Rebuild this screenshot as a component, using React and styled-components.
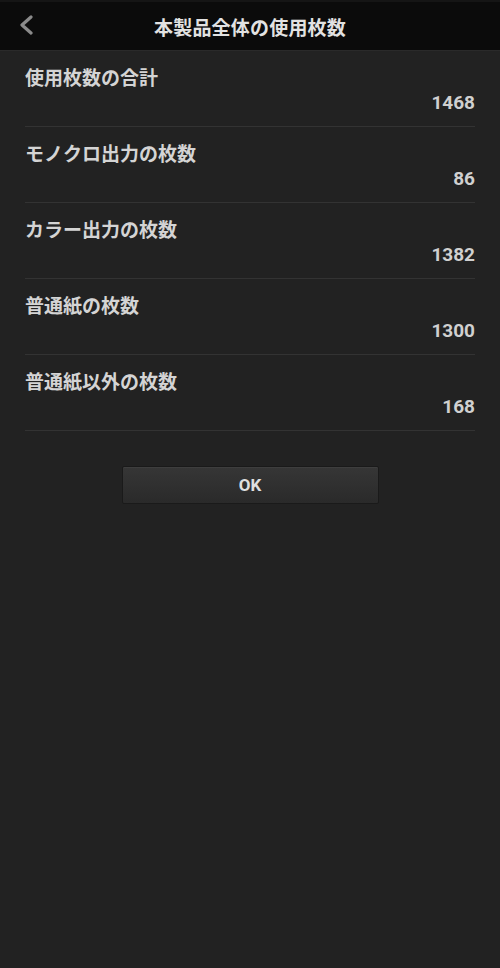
import React from 'react'
import styled, { createGlobalStyle } from 'styled-components'

const Global = createGlobalStyle`
  html, body {
    margin: 0;
    padding: 0;
    background: #222222;
  }
  body {
    font-family: Roboto, "Noto Sans CJK JP", sans-serif;
  }
`

const Screen = styled.div`
  width: 500px;
  min-height: 968px;
  background: #222222;
  display: flex;
  flex-direction: column;
`

const Header = styled.div`
  height: 48px;
  background: #0b0b0b;
  border-top: 2px solid #151515;
  border-bottom: 1px solid #2a2a2a;
  display: flex;
  align-items: center;
  justify-content: center;
  position: relative;
`

const BackButton = styled.div`
  position: absolute;
  left: 16px;
  top: 12px;
  width: 20px;
  height: 22px;
  display: flex;
  align-items: center;
  justify-content: center;
`

const Title = styled.div`
  font-size: 19px;
  font-weight: bold;
  color: #e2e2e2;
  letter-spacing: 0.2px;
`

const List = styled.div`
  padding: 0 25px;
  display: flex;
  flex-direction: column;
`

const Row = styled.div`
  height: 76px;
  box-sizing: border-box;
  border-bottom: 1px solid #333333;
  display: flex;
  flex-direction: column;
`

const Label = styled.div`
  margin-top: 16px;
  font-size: 19px;
  font-weight: bold;
  color: #d4d4d4;
  line-height: 24px;
`

const Value = styled.div`
  text-align: right;
  font-size: 19px;
  font-weight: bold;
  color: #d0d0d0;
  line-height: 24px;
`

const Actions = styled.div`
  display: flex;
  justify-content: center;
  padding-top: 35px;
`

const OkButton = styled.button`
  width: 257px;
  height: 38px;
  border: 1px solid #1a1a1a;
  border-radius: 2px;
  background: linear-gradient(#363636, #2a2a2a);
  box-shadow: inset 0 1px 0 #3e3e3e;
  color: #e0e0e0;
  font-family: Roboto, "Noto Sans CJK JP", sans-serif;
  font-size: 17px;
  font-weight: bold;
  cursor: pointer;
`

const rows = [
  { label: '使用枚数の合計', value: 1468 },
  { label: 'モノクロ出力の枚数', value: 86 },
  { label: 'カラー出力の枚数', value: 1382 },
  { label: '普通紙の枚数', value: 1300 },
  { label: '普通紙以外の枚数', value: 168 },
]

const App = () => {
  return (
    <Screen>
      <Global />
      <Header>
        <BackButton>
          <svg width="16" height="20" viewBox="0 0 16 20">
            <path d="M13 2 L4 10 L13 18" fill="none" stroke="#8a8a8a" strokeWidth="3.2" strokeLinecap="round" strokeLinejoin="round" />
          </svg>
        </BackButton>
        <Title>本製品全体の使用枚数</Title>
      </Header>
      <List>
        {rows.map(r => (
          <Row key={r.label}>
            <Label>{r.label}</Label>
            <Value>{r.value}</Value>
          </Row>
        ))}
      </List>
      <Actions>
        <OkButton>OK</OkButton>
      </Actions>
    </Screen>
  )
}

export default App
